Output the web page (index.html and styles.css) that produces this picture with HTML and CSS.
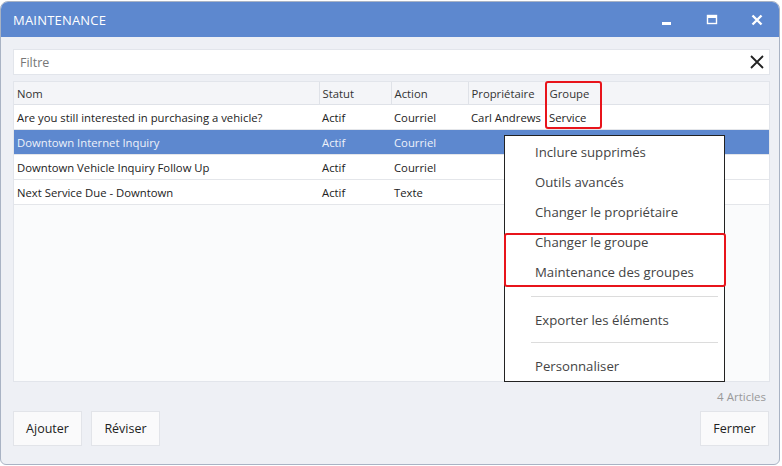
FILE: index.html
```html
<!DOCTYPE html>
<html lang="fr">
<head>
    <meta charset="UTF-8">
    <title>Maintenance</title>
    <link rel="stylesheet" href="styles.css">
</head>
<body>
    <div class="window">
        <div class="title-bar">
            <span class="title">MAINTENANCE</span>
            <div class="win-controls">
                <span class="ctl"><svg width="12" height="12" viewBox="0 0 12 12"><rect x="1" y="8" width="9" height="3" fill="#fff"/></svg></span>
                <span class="ctl"><svg width="12" height="12" viewBox="0 0 12 12"><rect x="1.5" y="1.5" width="9" height="8" fill="none" stroke="#fff" stroke-width="1.4"/><rect x="1" y="1" width="10" height="3" fill="#fff"/></svg></span>
                <span class="ctl"><svg width="12" height="12" viewBox="0 0 12 12"><path d="M1.5 1.5 L10.5 10.5 M10.5 1.5 L1.5 10.5" stroke="#fff" stroke-width="2.4"/></svg></span>
            </div>
        </div>

        <div class="content">
            <div class="filter">
                <span class="placeholder">Filtre</span>
                <svg width="14" height="14" viewBox="0 0 14 14"><path d="M1 1 L13 13 M13 1 L1 13" stroke="#222" stroke-width="1.8"/></svg>
            </div>

            <div class="grid">
                <table>
                    <colgroup>
                        <col style="width:305px">
                        <col style="width:72px">
                        <col style="width:77px">
                        <col style="width:78px">
                        <col>
                    </colgroup>
                    <thead>
                        <tr>
                            <th>Nom</th>
                            <th>Statut</th>
                            <th>Action</th>
                            <th>Propriétaire</th>
                            <th class="last">Groupe</th>
                        </tr>
                    </thead>
                    <tbody>
                        <tr>
                            <td>Are you still interested in purchasing a vehicle?</td>
                            <td>Actif</td>
                            <td>Courriel</td>
                            <td>Carl Andrews</td>
                            <td>Service</td>
                        </tr>
                        <tr class="selected">
                            <td>Downtown Internet Inquiry</td>
                            <td>Actif</td>
                            <td>Courriel</td>
                            <td></td>
                            <td></td>
                        </tr>
                        <tr>
                            <td>Downtown Vehicle Inquiry Follow Up</td>
                            <td>Actif</td>
                            <td>Courriel</td>
                            <td></td>
                            <td></td>
                        </tr>
                        <tr>
                            <td>Next Service Due - Downtown</td>
                            <td>Actif</td>
                            <td>Texte</td>
                            <td></td>
                            <td></td>
                        </tr>
                    </tbody>
                </table>
            </div>

            <div class="count">4 Articles</div>

            <div class="footer">
                <div class="btn-group">
                    <button>Ajouter</button>
                    <button>Réviser</button>
                </div>
                <button>Fermer</button>
            </div>
        </div>

        <!-- surlignages -->
        <div class="highlight hl-column"></div>
        <div class="highlight hl-menu"></div>

        <div class="context-menu">
            <div class="menu-item">Inclure supprimés</div>
            <div class="menu-item">Outils avancés</div>
            <div class="menu-item">Changer le propriétaire</div>
            <div class="menu-item">Changer le groupe</div>
            <div class="menu-item">Maintenance des groupes</div>
            <div class="menu-sep first"></div>
            <div class="menu-item">Exporter les éléments</div>
            <div class="menu-sep"></div>
            <div class="menu-item">Personnaliser</div>
        </div>
    </div>
</body>
</html>
```

FILE: styles.css
```css
body {
    margin: 0;
    background-color: #ffffff;
    font-family: "Open Sans", "Noto Sans", sans-serif;
    font-size: 12px;
    color: #222;
}

.window {
    position: relative;
    width: 778px;
    height: 462px;
    margin: 1px 0 0 0;
    border: 1px solid #a9b3c4;
    border-radius: 8px 8px 6px 6px;
    background-color: #eef0f5;
    overflow: hidden;
}

.title-bar {
    height: 35px;
    background-color: #5d88cf;
    display: flex;
    align-items: center;
    justify-content: space-between;
    padding: 0 0 0 12px;
}

.title {
    color: #fff;
    font-size: 13px;
    letter-spacing: 0.2px;
}

.win-controls {
    display: flex;
    align-items: center;
}

.ctl {
    width: 45px;
    display: flex;
    justify-content: center;
}

.content {
    padding: 12px 9px 0 12px;
}

.filter {
    height: 24px;
    background-color: #fff;
    border: 1px solid #e2e5eb;
    display: flex;
    align-items: center;
    justify-content: space-between;
    padding: 0 5px 0 6px;
}

.placeholder {
    color: #777;
    font-size: 12.5px;
}

.grid {
    margin-top: 6px;
    height: 299px;
    background-color: #fafbfc;
    border: 1px solid #e2e5eb;
}

table {
    width: 100%;
    table-layout: fixed;
    border-collapse: collapse;
    font-size: 11.3px;
}

th {
    height: 22px;
    text-align: left;
    font-weight: normal;
    color: #333;
    background-color: #f4f5f8;
    border-right: 1px solid #dfe2e8;
    border-bottom: 1px solid #dfe2e8;
    padding: 0 3px;
}

th.last {
    border-right: none;
}

td {
    height: 24px;
    padding: 0 3px;
    background-color: #fff;
    border-bottom: 1px solid #e4e6ea;
    white-space: nowrap;
    overflow: hidden;
}

tr.selected td {
    background-color: #5d88cf;
    color: #eef2fa;
}

.count {
    text-align: right;
    color: #999;
    font-size: 11.5px;
    padding: 7px 4px 0 0;
    height: 16px;
}

.footer {
    display: flex;
    justify-content: space-between;
    margin-top: 6px;
    padding-right: 1px;
}

.btn-group {
    display: flex;
    gap: 9px;
}

button {
    height: 35px;
    width: 69px;
    background-color: #fafafb;
    border: 1px solid #e2e4e9;
    font-family: inherit;
    font-size: 12.5px;
    color: #222;
    padding: 0;
}

.highlight {
    position: absolute;
    border: 2px solid #e8141b;
    border-radius: 3px;
    z-index: 2;
}

.hl-column {
    left: 544px;
    top: 79px;
    width: 53px;
    height: 44px;
}

.hl-menu {
    left: 503px;
    top: 231px;
    width: 218px;
    height: 50px;
}

.context-menu {
    position: absolute;
    left: 503px;
    top: 133px;
    width: 219px;
    height: 244px;
    background-color: #fff;
    border: 1px solid #222;
    z-index: 1;
    padding-top: 1px;
}

.menu-item {
    height: 30px;
    line-height: 30px;
    padding-left: 30px;
    color: #444;
    font-size: 13.2px;
}

.menu-sep {
    height: 1px;
    background-color: #dcdcdc;
    margin: 7px 6px 8px 26px;
}

.menu-sep.first {
    margin-top: 9px;
}
```
